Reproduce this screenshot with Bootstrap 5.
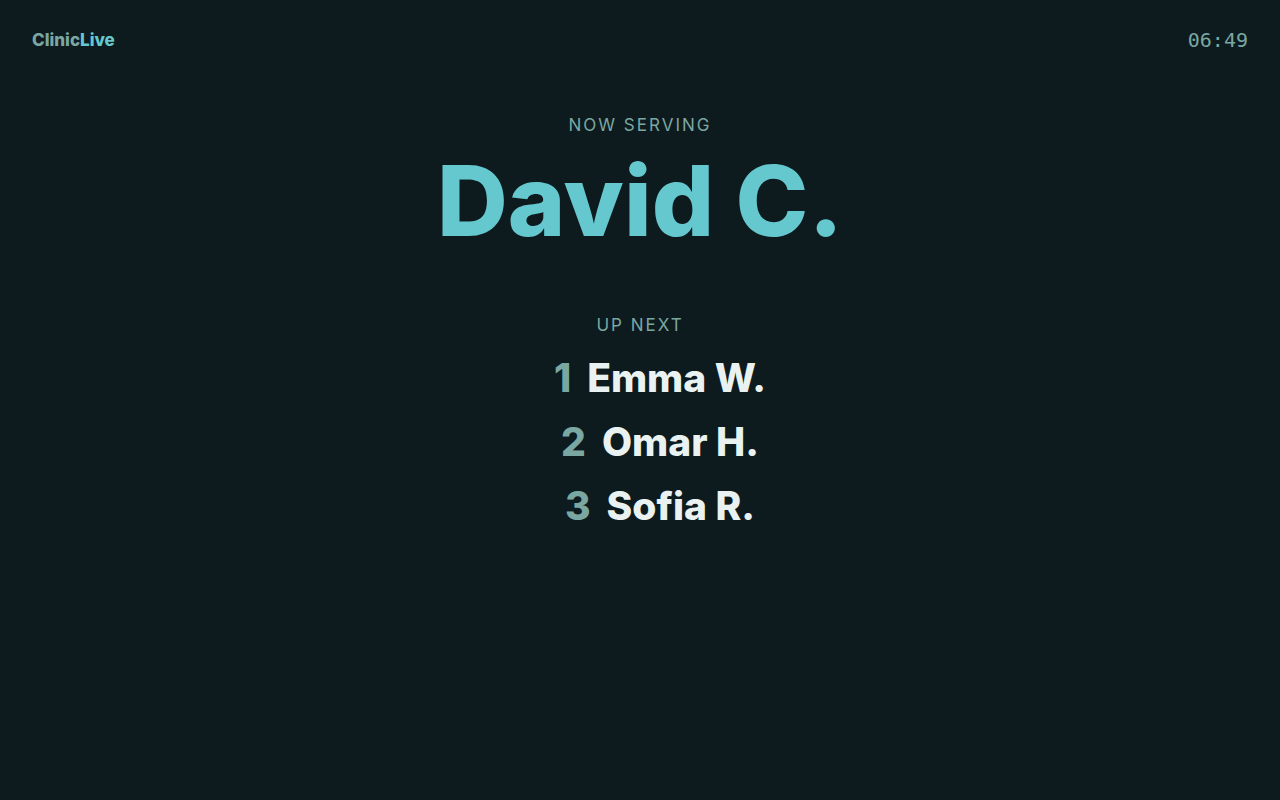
<!DOCTYPE html>
<html lang="en">
<head>
<meta charset="utf-8">
<meta name="viewport" content="width=device-width, initial-scale=1">
<title>ClinicLive</title>
<link href="https://cdn.jsdelivr.net/npm/bootstrap@5.3.0/dist/css/bootstrap.min.css" rel="stylesheet">
<style>
body{background:#0d1b1e;color:#e9f2f1;font-family:Inter,"Noto Sans",sans-serif}
.muted{color:#7ba7a3}
.accent{color:#64c8ce}
.brand{font-size:17px;line-height:26px;font-weight:800}
.clock{font-family:"DejaVu Sans Mono",monospace;font-size:20px;line-height:32px}
.eyebrow{font-size:17px;line-height:26px;letter-spacing:2px;font-weight:400}
.current{font-size:98px;line-height:110px;font-weight:800}
.queue{font-size:39px;line-height:48px;font-weight:800;padding-left:40px}
</style>
</head>
<body class="min-vh-100 d-flex flex-column">
<header class="d-flex justify-content-between align-items-center px-4 py-4 mx-2">
<div class="brand muted">Clinic<span class="accent">Live</span></div>
<time class="clock muted">06:49</time>
</header>
<main class="text-center pt-4 mt-2">
<h2 class="eyebrow muted mb-2">NOW SERVING</h2>
<h1 class="current accent mb-5">David C.</h1>
<h2 class="eyebrow muted mb-3 pt-2">UP NEXT</h2>
<ol class="queue list-unstyled d-flex flex-column gap-3">
<li><span class="muted me-3">1</span>Emma W.</li>
<li><span class="muted me-3">2</span>Omar H.</li>
<li><span class="muted me-3">3</span>Sofia R.</li>
</ol>
</main>
<script src="https://cdn.jsdelivr.net/npm/bootstrap@5.3.0/dist/js/bootstrap.bundle.min.js"></script>
</body>
</html>
